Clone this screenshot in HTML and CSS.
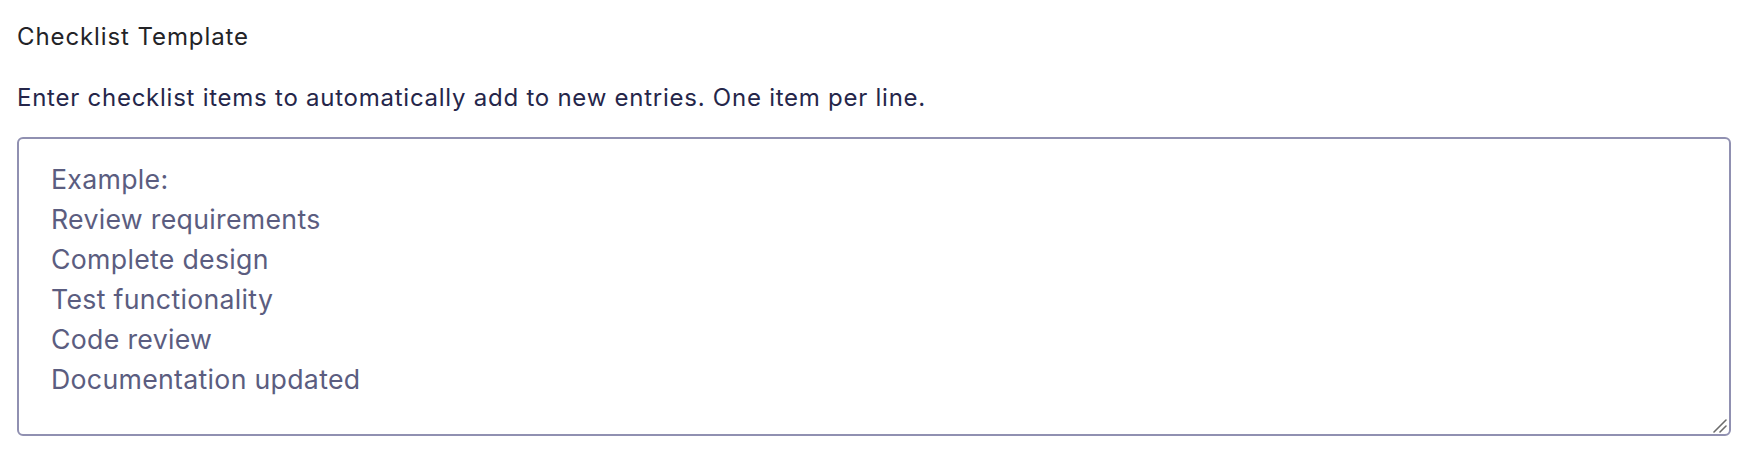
FILE: index.html
```html
<!DOCTYPE html>
<html>
<head>
<meta charset="utf-8">
<link rel="stylesheet" href="styles.css">
</head>
<body>
<div class="field">
  <label class="field-label" for="tpl">Checklist Template</label>
  <p class="field-help">Enter checklist items to automatically add to new entries. One item per line.</p>
  <div class="input-wrap">
    <textarea id="tpl" class="field-input" placeholder="Example:&#10;Review requirements&#10;Complete design&#10;Test functionality&#10;Code review&#10;Documentation updated"></textarea>
    <svg class="grip" width="14" height="14" viewBox="0 0 14 14" aria-hidden="true">
      <line x1="1" y1="13" x2="13" y2="1" stroke="#6b6b6b" stroke-width="1.6" stroke-linecap="round"/>
      <line x1="7" y1="13" x2="13" y2="7" stroke="#6b6b6b" stroke-width="1.6" stroke-linecap="round"/>
    </svg>
  </div>
</div>
</body>
</html>
```
FILE: styles.css
```css
html, body {
  margin: 0;
  padding: 0;
  background: #ffffff;
}
body {
  font-family: Inter, "Noto Sans", sans-serif;
  padding: 17px 19px 0 17px;
}
.field {
  display: flex;
  flex-direction: column;
}
.field-label {
  font-size: 24px;
  line-height: 40px;
  letter-spacing: 0.9px;
  color: #232327;
  font-weight: 400;
}
.field-help {
  margin: 24px 0 22px 0;
  font-size: 24px;
  line-height: 34px;
  letter-spacing: 0.75px;
  color: #25264a;
}
.input-wrap {
  position: relative;
  display: flex;
}
.field-input {
  box-sizing: border-box;
  width: 100%;
  height: 299px;
  border: 2px solid #9090b1;
  border-radius: 6px;
  padding: 20px 32px;
  font-family: Inter, "Noto Sans", sans-serif;
  font-size: 26.7px;
  line-height: 40px;
  letter-spacing: 0.3px;
  color: #25264a;
  resize: none;
  outline: none;
  margin: 0;
}
.field-input::placeholder {
  color: #5b5d80;
  opacity: 1;
}
.grip {
  position: absolute;
  right: 4px;
  bottom: 3px;
}
```
